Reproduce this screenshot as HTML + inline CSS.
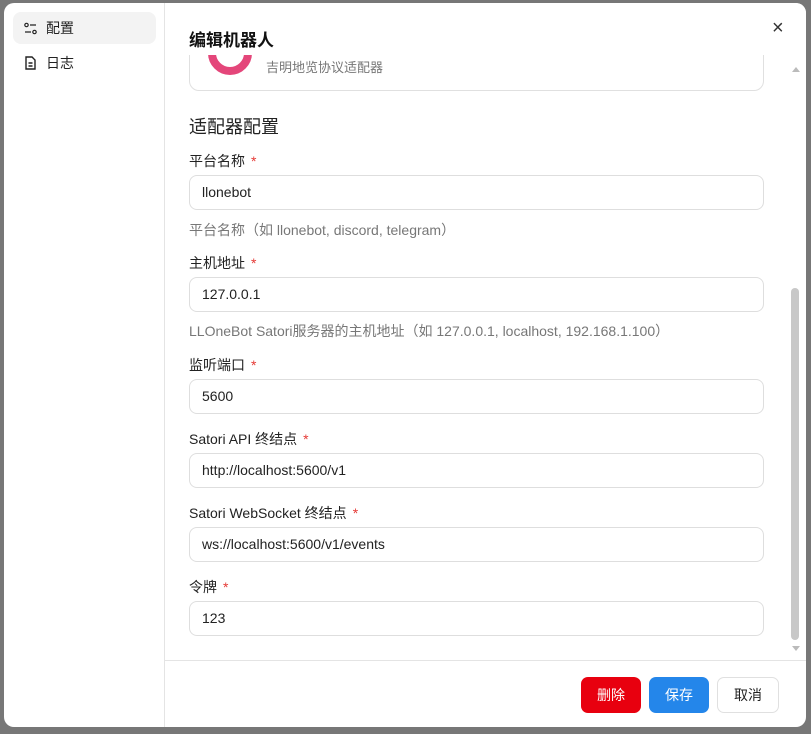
<!DOCTYPE html>
<html><head><meta charset="utf-8"><style>
*{box-sizing:border-box;margin:0;padding:0}
body{width:811px;height:734px;background:#777;font-family:"Liberation Sans","Noto Sans CJK SC",sans-serif;position:relative;overflow:hidden}
.dlg{position:absolute;left:4px;top:3px;width:802px;height:724px;background:#fff;border-radius:10px;overflow:hidden}
.side{position:absolute;left:0;top:0;width:161px;height:100%;border-right:1px solid #e4e4e4}
.nav{position:absolute;left:9px;width:143px;height:32px;border-radius:8px;font-size:14px;color:#222;display:flex;align-items:center;padding-left:11px}
.nav svg{margin-right:9px}
.a{position:absolute;color:#222}
.lbl{position:absolute;left:185px;font-size:14px;color:#222}
.lbl i{color:#e53935;font-style:normal;margin-left:6px}
.inp{position:absolute;left:185px;width:575px;height:35px;border:1px solid #dedede;border-radius:8px;font-size:14px;padding-left:12px;line-height:33px;color:#222}
.help{position:absolute;left:185px;font-size:14px;color:#777}
.btn{position:absolute;top:674px;height:36px;border-radius:7px;font-size:14px;text-align:center;line-height:36px}
</style></head><body>
<div class="dlg">
<div class="side">
<div class="nav" style="top:9px;background:#f3f3f3"><svg width="13" height="13" viewBox="0 0 13 13" fill="none" stroke="#222" stroke-width="1.2"><circle cx="2.5" cy="3" r="1.7"/><line x1="6" y1="3" x2="12" y2="3"/><circle cx="10.5" cy="10" r="1.7"/><line x1="1" y1="10" x2="7" y2="10"/></svg>配置</div>
<div class="nav" style="top:44px"><svg width="13" height="14" viewBox="0 0 13 14" fill="none" stroke="#222" stroke-width="1.4"><path d="M2 1h6l3 3v9H2z"/><line x1="4.5" y1="7" x2="8.5" y2="7"/><line x1="4.5" y1="10" x2="8.5" y2="10"/></svg>日志</div>
</div>
<div style="position:absolute;left:185px;top:-20px;width:575px;height:108px;border:1px solid #e0e0e0;border-radius:10px"></div>
<div style="position:absolute;left:204px;top:28px;width:44px;height:44px;border-radius:50%;border:8px solid #e4467a"></div>
<div class="a" style="left:262px;top:54px;font-size:13px;color:#777">吉明地览协议适配器</div>
<div style="position:absolute;left:161px;top:0;width:641px;height:52px;background:#fff"></div>
<div class="a" style="left:185px;top:23px;font-size:17px;font-weight:bold;color:#111">编辑机器人</div>
<div class="a" style="left:768px;top:14px;font-size:20px;color:#333">×</div>
<div class="a" style="left:185px;top:110px;font-size:18px">适配器配置</div>
<div class="lbl" style="top:148px">平台名称<i>*</i></div>
<div class="inp" style="top:172px">llonebot</div>
<div class="help" style="top:217px">平台名称（如 llonebot, discord, telegram）</div>
<div class="lbl" style="top:250px">主机地址<i>*</i></div>
<div class="inp" style="top:274px">127.0.0.1</div>
<div class="help" style="top:318px">LLOneBot Satori服务器的主机地址（如 127.0.0.1, localhost, 192.168.1.100）</div>
<div class="lbl" style="top:352px">监听端口<i>*</i></div>
<div class="inp" style="top:376px">5600</div>
<div class="lbl" style="top:426px">Satori API 终结点<i>*</i></div>
<div class="inp" style="top:450px">http://localhost:5600/v1</div>
<div class="lbl" style="top:500px">Satori WebSocket 终结点<i>*</i></div>
<div class="inp" style="top:524px">ws://localhost:5600/v1/events</div>
<div class="lbl" style="top:574px">令牌<i>*</i></div>
<div class="inp" style="top:598px">123</div>
<div style="position:absolute;left:788px;top:64px;width:0;height:0;border:4px solid transparent;border-bottom:5px solid #bbb;border-top:0"></div>
<div style="position:absolute;left:787px;top:285px;width:8px;height:352px;background:#c8c8c8;border-radius:4px"></div>
<div style="position:absolute;left:788px;top:643px;width:0;height:0;border:4px solid transparent;border-top:5px solid #bbb;border-bottom:0"></div>
<div style="position:absolute;left:161px;top:657px;width:641px;height:1px;background:#e4e4e4"></div>
<div class="btn" style="left:577px;width:60px;background:#e8000f;color:#fff">删除</div>
<div class="btn" style="left:645px;width:60px;background:#2486ea;color:#fff">保存</div>
<div class="btn" style="left:713px;width:62px;border:1px solid #e0e0e0;color:#222;line-height:34px">取消</div>
</div>
</body></html>
